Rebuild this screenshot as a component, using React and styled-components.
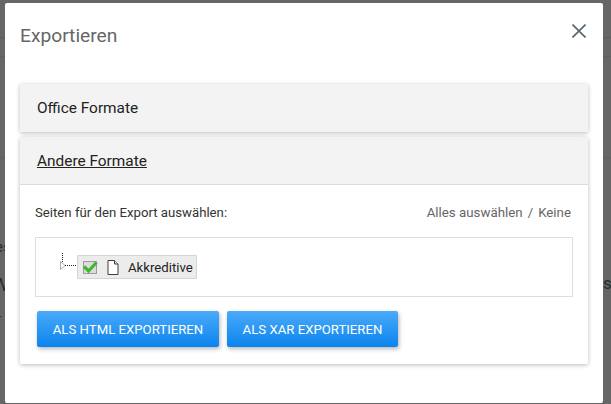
import React from "react";
import styled, { createGlobalStyle } from "styled-components";

const Global = createGlobalStyle`
  html, body { margin: 0; padding: 0; height: 100%; overflow: hidden; }
  body { font-family: Roboto, "Liberation Sans", sans-serif; }
`;

const Backdrop = styled.div`
  position: relative;
  width: 611px;
  height: 404px;
  overflow: hidden;
  background:
    linear-gradient(#5d5d5d, #5d5d5d) 0 37px / 100% 1px no-repeat,
    linear-gradient(#5f5f5f, #5f5f5f) 0 56px / 100% 1px no-repeat,
    linear-gradient(#5f5f5f, #5f5f5f) 0 157px / 100% 1px no-repeat,
    #666666;
  padding: 3px 8px 0 5px;
  box-sizing: border-box;
`;

const Peek = styled.span`
  position: absolute;
  left: ${(p) => p.$x}px;
  top: ${(p) => p.$y}px;
  font-size: ${(p) => p.$size}px;
  line-height: 1;
  color: #2c2c2c;
`;

const Modal = styled.div`
  position: relative;
  height: 400px;
  background: #fff;
  border-radius: 2px;
  box-sizing: border-box;
  padding: 0 15px;
  display: flex;
  flex-direction: column;
`;

const Header = styled.header`
  height: 81px;
  flex: none;
  display: flex;
  align-items: flex-start;
  justify-content: space-between;
`;

const Title = styled.h2`
  margin: 22px 0 0;
  font-size: 19.2px;
  line-height: 22px;
  font-weight: 400;
  color: #666;
`;

const Close = styled.button`
  margin: 21px 2px 0 0;
  padding: 0;
  width: 14px;
  height: 14px;
  border: 0;
  background: none;
  display: flex;
  color: #56646e;
`;

const Panel = styled.section`
  background: #fff;
  border-radius: 2px;
  box-shadow: 0 1px 4px rgba(0, 0, 0, 0.28);
  margin-bottom: 5px;
`;

const PanelHead = styled.div`
  height: 48px;
  box-sizing: border-box;
  padding-left: 17px;
  display: flex;
  align-items: center;
  background: #f3f3f3;
  font-size: 15.4px;
  color: #222;
  text-decoration: ${(p) => (p.$open ? "underline" : "none")};
  border-bottom: ${(p) => (p.$open ? "1px solid #dcdcdc" : "0")};
`;

const PanelBody = styled.div`
  padding: 20px 15px 17px;
`;

const SelectRow = styled.div`
  display: flex;
  justify-content: space-between;
  font-size: 13.2px;
  line-height: 16px;
  color: #333;
`;

const SelectLinks = styled.div`
  display: flex;
  gap: 5px;
  color: #666;
  font-size: 13.3px;
  margin-right: 2px;
`;

const TreeBox = styled.div`
  margin-top: 16px;
  height: 60px;
  box-sizing: border-box;
  border: 1px solid #ddd;
  display: flex;
  align-items: flex-start;
  padding: 15px 0 0 24px;
`;

const Connector = styled.svg`
  flex: none;
  width: 17px;
  height: 20px;
`;

const TreeNode = styled.div`
  display: flex;
  align-items: center;
  height: 24px;
  margin-top: 2px;
  box-sizing: border-box;
  padding: 0 3px 0 5px;
  background: #ececec;
  border: 1px solid #d4d4d4;
  border-radius: 1px;
  font-size: 13.2px;
  color: #222;
`;

const NodeIcon = styled.svg`
  flex: none;
  margin-right: ${(p) => p.$gap}px;
`;

const Actions = styled.div`
  display: flex;
  gap: 8px;
  margin-top: 14px;
  padding-left: 2px;
`;

const Action = styled.button`
  height: 36px;
  padding: 0;
  width: ${(p) => p.$w}px;
  border: 0;
  border-radius: 2px;
  background: linear-gradient(#4aaaf9, #0b84ee);
  box-shadow: 1px 2px 4px rgba(0, 0, 0, 0.3);
  color: #fff;
  font-family: inherit;
  font-size: 13.2px;
  font-weight: 400;
`;

export default function App() {
  return (
    <Backdrop>
      <Global />
      <Peek $x={-5} $y={240} $size={15}>es</Peek>
      <Peek $x={-8} $y={275} $size={19}>W</Peek>
      <Peek $x={-4} $y={312} $size={15}>r</Peek>
      <Peek $x={603} $y={275} $size={17}>s</Peek>
      <Modal>
        <Header>
          <Title>Exportieren</Title>
          <Close aria-label="Schließen">
            <svg width="14" height="14" viewBox="0 0 14 14" fill="none" stroke="currentColor" strokeWidth="1.6">
              <path d="M.5 .5 L13.5 13.5 M13.5 .5 L.5 13.5" />
            </svg>
          </Close>
        </Header>
        <Panel>
          <PanelHead>Office Formate</PanelHead>
        </Panel>
        <Panel>
          <PanelHead $open>Andere Formate</PanelHead>
          <PanelBody>
            <SelectRow>
              <span>Seiten für den Export auswählen:</span>
              <SelectLinks>
                <span>Alles auswählen</span>
                <span>/</span>
                <span>Keine</span>
              </SelectLinks>
            </SelectRow>
            <TreeBox>
              <Connector viewBox="0 0 17 20">
                <path d="M2.5 0 V9 M5 12.5 H16" stroke="#222" strokeDasharray="1 1" fill="none" />
                <path d="M.5 8.5 L5 12.5 L.5 16.5 Z" fill="#fff" stroke="#aaa" />
              </Connector>
              <TreeNode>
                <NodeIcon width="15" height="15" viewBox="0 0 15 15" $gap={9}>
                  <rect x="0.5" y="1.5" width="13" height="12" fill="#dcdcdc" stroke="#9c9c9c" />
                  <path d="M1 6.5 L5.5 11 L13.5 2.5" fill="none" stroke="#3fb62c" strokeWidth="3.2" />
                </NodeIcon>
                <NodeIcon width="12" height="15" viewBox="0 0 12 15" $gap={9}>
                  <path d="M1 .5 H7.5 L11 4 V14.5 H1 Z" fill="#fff" stroke="#4a3c30" />
                  <path d="M7.5 .5 V4 H11" fill="#ddd" stroke="#4a3c30" />
                </NodeIcon>
                Akkreditive
              </TreeNode>
            </TreeBox>
            <Actions>
              <Action $w={182}>ALS HTML EXPORTIEREN</Action>
              <Action $w={171}>ALS XAR EXPORTIEREN</Action>
            </Actions>
          </PanelBody>
        </Panel>
      </Modal>
    </Backdrop>
  );
}
